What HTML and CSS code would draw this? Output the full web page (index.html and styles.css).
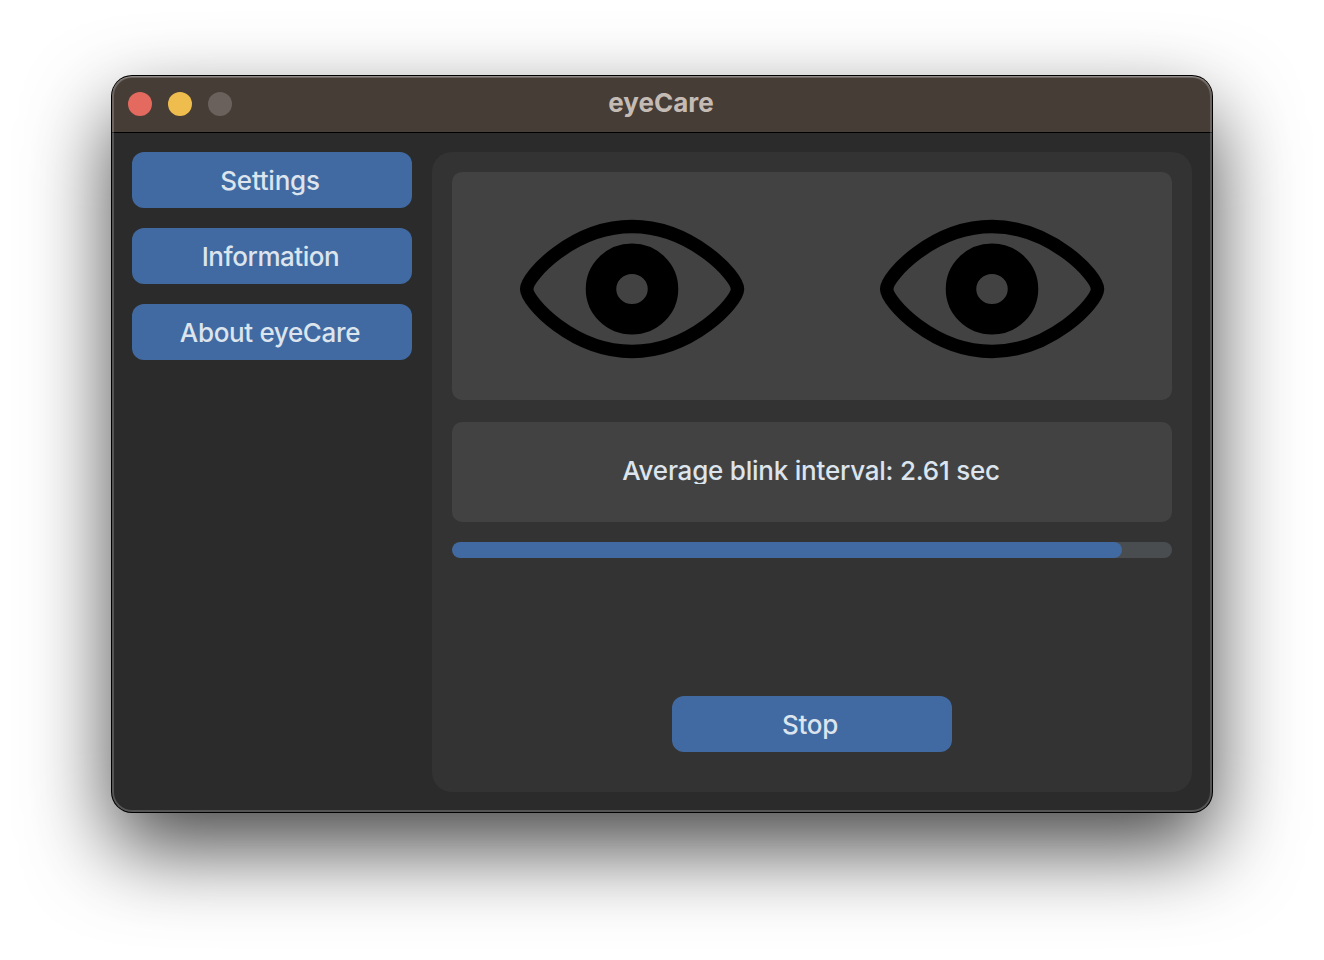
FILE: index.html
```
<!DOCTYPE html>
<html lang="en">
<head>
<meta charset="utf-8">
<title>eyeCare</title>
<link rel="stylesheet" href="styles.css">
</head>
<body>
<div class="window">
  <header class="titlebar">
    <div class="lights"><span class="light close"></span><span class="light minimize"></span><span class="light zoom"></span></div>
    <h1 class="title">eyeCare</h1>
  </header>
  <main class="content">
    <nav class="sidebar">
      <button class="button"><span class="settings">Settings</span></button>
      <button class="button"><span class="information">Information</span></button>
      <button class="button"><span class="about">About eyeCare</span></button>
    </nav>
    <section class="panel">
      <div class="card eyes">
        <svg class="eye" viewBox="0 0 240 160">
          <path class="lid" d="M14.700 80C14.700 67 61 17.600 120 17.600S225.500 67 225.500 80S179 142.400 120 142.400S14.700 93 14.700 80Z"/>
          <ellipse class="iris" cx="120" cy="80" rx="31" ry="30.300"/>
        </svg>
        <svg class="eye" viewBox="0 0 240 160">
          <path class="lid" d="M14.700 80C14.700 67 61 17.600 120 17.600S225.500 67 225.500 80S179 142.400 120 142.400S14.700 93 14.700 80Z"/>
          <ellipse class="iris" cx="120" cy="80" rx="31" ry="30.300"/>
        </svg>
      </div>
      <div class="card interval"><span class="average">Average blink interval: 2.61 sec</span></div>
      <div class="track"><div class="fill"></div></div>
      <button class="button stop"><span class="stop-label">Stop</span></button>
    </section>
  </main>
</div>
</body>
</html>
```
FILE: styles.css
```
* { box-sizing: border-box; }
body {
  margin: 0;
  height: 960px;
  padding: 76px 112px 0;
  overflow: hidden;
  background: #fff;
  font-family: Inter, "Liberation Sans", sans-serif;
}
.window {
  position: relative;
  width: 1100px;
  height: 736px;
  border-radius: 20px;
  overflow: hidden;
  background: #2b2b2b;
  box-shadow: 0 0 0 1px #000, 0 36px 84px rgba(0,0,0,.72);
}
/* light rim over the window edge */
.window::after {
  content: "";
  position: absolute;
  inset: 0;
  border-radius: 20px;
  box-shadow: inset 0 0 0 2px rgba(255,255,255,.2), inset 0 1px 0 rgba(255,255,255,.25);
  pointer-events: none;
}
.titlebar {
  height: 57px;
  padding: 0 16px;
  display: grid;
  grid-template-columns: 104px 1fr 104px;
  align-items: center;
  background: #463d37;
  border-bottom: 1px solid #000;
}
.lights { display: flex; gap: 16px; }
.light { width: 24px; height: 24px; border-radius: 50%; }
.close { background: #e4695e; }
.minimize { background: #efbd4e; }
.zoom { background: #6a615c; }
.title {
  margin: 0;
  padding: 0 2px 2px 0;
  text-align: center;
  font-size: 26px;
  line-height: 32px;
  font-weight: 700;
  letter-spacing: 0;
  color: #c5bbb5;
}
.content { display: flex; gap: 20px; padding: 19px 20px 20px; height: 679px; }
.sidebar { display: flex; flex-direction: column; gap: 20px; width: 280px; }
.button {
  display: flex;
  align-items: center;
  justify-content: center;
  width: 280px;
  height: 56px;
  padding: 2px 4px 0 0;
  border: 0;
  border-radius: 12px;
  background: #406aa1;
  color: #dce4ee;
  font: 500 26px/32px Inter, "Liberation Sans", sans-serif;
  letter-spacing: -.25px;
  white-space: nowrap;
}
.information { padding-left: 1px; letter-spacing: -.45px; }
.about { letter-spacing: -.35px; }
.panel {
  width: 760px;
  height: 640px;
  padding: 20px;
  border-radius: 20px;
  background: #333;
}
.card { border-radius: 10px; background: #424242; }
.eyes {
  display: flex;
  justify-content: space-around;
  align-items: center;
  height: 228px;
  padding-top: 6px;
}
.eye { width: 240px; height: 160px; }
.lid { fill: none; stroke: #000; stroke-width: 13.500; }
.iris { fill: none; stroke: #000; stroke-width: 30.500; }
.interval {
  display: flex;
  justify-content: center;
  height: 100px;
  margin-top: 22px;
  padding: 33px 2px 0 0;
  color: #dce4ee;
  font-size: 26px;
  font-weight: 500;
  letter-spacing: -.22px;
  line-height: 32px;
  white-space: nowrap;
}
/* the label box ends just under the baseline */
.average { height: 29px; overflow: hidden; }
.track {
  height: 16px;
  margin-top: 20px;
  border-radius: 8px;
  overflow: hidden;
  background: #4a4d50;
}
.fill { width: 670px; height: 16px; border-radius: 8px; background: #406aa1; }
.stop { margin: 138px auto 0; }
```
